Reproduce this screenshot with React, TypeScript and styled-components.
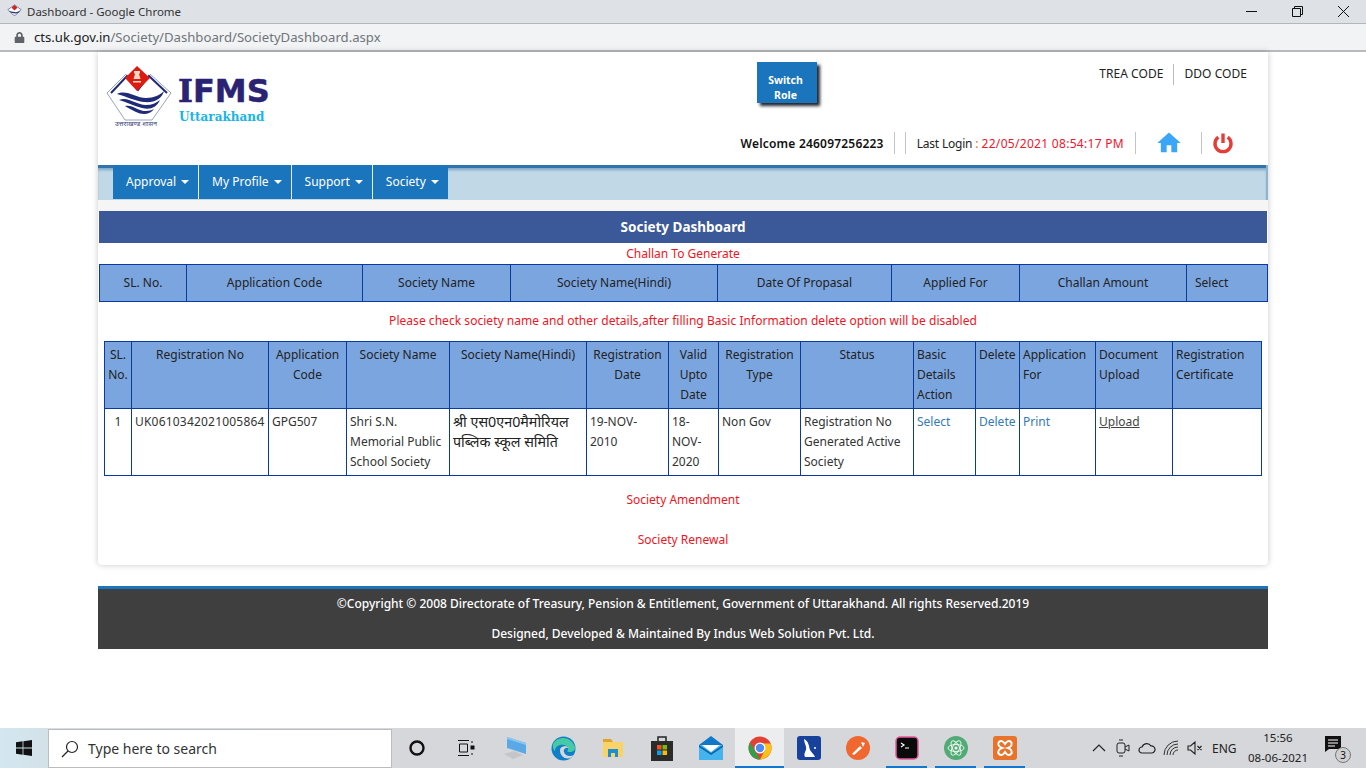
import React from "react";
import styled, { createGlobalStyle } from "styled-components";
import { FaLock } from "react-icons/fa";
import { MdHome } from "react-icons/md";

const Global = createGlobalStyle`
  html, body { margin: 0; padding: 0; background: #fff; }
  body { font-family: "Noto Sans", "Open Sans", sans-serif; font-size: 12px; color: #333; overflow: hidden; }
  * { box-sizing: border-box; }
`;
const Shell = styled.div`height: 768px; width: 1366px; display: flex; flex-direction: column; overflow: hidden;`;
const TitleBar = styled.div`height: 24px; background: #dee1e6; border-bottom: 1px solid #b4b6b9; display: flex; align-items: center; padding-left: 7px; font-size: 11.5px; color: #333; flex: none;`;
const TitleText = styled.span`margin-left: 5px; flex: 1;`;
const WinBtn = styled.div`width: 46px; height: 21px; display: flex; align-items: center; justify-content: center;`;
const AddressBar = styled.div`height: 28px; background: #f1f3f4; border-bottom: 2px solid #b9babb; display: flex; align-items: center; padding-left: 14px; font-size: 13.15px; color: #70757a; flex: none;`;
const Host = styled.span`color: #202124;`;
const UrlText = styled.span`margin-left: 9px;`;
const Main = styled.div`flex: 1; min-height: 0; display: flex; flex-direction: column; align-items: center;`;
const Card = styled.div`width: 1170px; height: 513px; background: #fff; border-radius: 0 0 4px 4px; box-shadow: 0 0 6px rgba(0,0,0,.22); flex: none;`;
const Header = styled.header`height: 113px; display: flex;`;
const LogoBox = styled.div`width: 640px; padding: 13px 0 0 8px; display: flex; align-items: flex-start;`;
const LogoText = styled.div`margin: 11px 0 0 6px; display: flex; flex-direction: column;`;
const LogoMark = styled.div`font: 700 32px/30px "DejaVu Sans", sans-serif; color: #2a2272; -webkit-text-stroke: .5px #2a2272;`;
const LogoI = styled.span`font-family: "DejaVu Serif", serif;`;
const LogoSub = styled.div`font: 700 12px/14px "DejaVu Serif", serif; color: #18b4e9; margin: 4px 0 0 1px;`;
const HeaderRight = styled.div`flex: 1; min-width: 0; display: flex; flex-direction: column; justify-content: space-between; padding: 10px 0 11px;`;
const HeaderTop = styled.div`display: flex; justify-content: space-between; align-items: flex-start; padding-left: 19px;`;
const SwitchRole = styled.button`width: 60px; height: 41px; border: 0; background: #1b75bc; color: #fff; font: 700 10.5px/15px "Noto Sans", sans-serif; padding: 11px 11px 0 8px; box-shadow: 3px 3px 3px #23272e;`;
const TopLinks = styled.div`display: flex; margin-top: 2px; padding-right: 21px; color: #222; letter-spacing: .05px;`;
const TopLink = styled.span<{ $sep?: boolean }>`height: 21px; line-height: 19px; ${(p) => (p.$sep ? "border-right: 1px solid #bbb; padding-right: 10px; margin-right: 10px;" : "")}`;
const HeaderBottom = styled.div`display: flex; justify-content: flex-end; align-items: center; height: 22px; color: #222;`;
const Welcome = styled.span`height: 22px; display: flex; align-items: center; border-right: 1px solid #c4c4c4; padding-right: 10px; margin-right: 10px; white-space: nowrap; font-weight: 600; color: #111; letter-spacing: .2px;`;
const LastLogin = styled.span`height: 22px; display: flex; align-items: center; border: solid #c4c4c4; border-width: 0 1px; padding: 0 11px; white-space: nowrap;`;
const LoginLabel = styled.span`letter-spacing: -.2px;`;
const LoginTime = styled.span`color: #f0142d; margin-left: 3px; letter-spacing: .3px;`;
const Colon = styled.span`color: #e8641b; margin-left: 3px;`;
const HomeCell = styled.span`width: 66px; height: 22px; display: flex; align-items: center; justify-content: center; border-right: 1px solid #c4c4c4;`;
const PowerCell = styled.span`width: 66px; padding-left: 10px; display: flex; align-items: center;`;
const NavBand = styled.nav`height: 35px; background: #c1d9e6; border-right: 2px solid #8fb3cf; box-shadow: inset 0 3px 0 #2f74ad, inset 0 6px 3px -1px #7ea8c9; padding-left: 15px; display: flex;`;
const NavItem = styled.div`height: 34px; background: #1b75bc; color: #fff; display: flex; align-items: center; padding: 0 9px 2px 13px; font-size: 12px; border-right: 1px solid #e7f0f6; gap: 5px; &:last-child { border-right: 0; }`;
const Caret = styled.i`width: 0; height: 0; border-left: 4px solid transparent; border-right: 4px solid transparent; border-top: 4px solid #fff; margin-top: 2px;`;
const Strip = styled.div`height: 11px; background: #f5f5f5;`;
const Panel = styled.section`padding: 0 1px;`;
const Banner = styled.h2`margin: 0; height: 32px; background: #3b5998; color: #fff; font-size: 13.5px; font-weight: 700; text-align: center; line-height: 32px;`;
const RedLine = styled.div<{ $h: number; $mb?: number }>`height: ${(p) => p.$h}px; line-height: ${(p) => p.$h}px; margin-bottom: ${(p) => p.$mb ?? 0}px; text-align: center; color: #f0141e;`;
const Notice = styled(RedLine)`letter-spacing: .04px;`;
const Grid = styled.table<{ $inset?: number }>`border-collapse: collapse; table-layout: fixed; width: ${(p) => (p.$inset ? 1157 : 1168)}px; margin: 0 ${(p) => p.$inset ?? 0}px;`;
const Th = styled.th`background: #7ba5df; border: 1px solid #0a3a9e; font-weight: 400; color: #222; padding: 3px 3px 3px; line-height: 20px; vertical-align: top;`;
const ThLeft = styled(Th)`text-align: left;`;
const Th1 = styled(Th)`height: 37px; vertical-align: middle; padding: 0 8px 1px;`;
const Th1Left = styled(Th1)`text-align: left;`;
const Td = styled.td`border: 1px solid #0a3a9e; padding: 3px 3px 3px; line-height: 20px; vertical-align: top; color: #333; overflow: hidden;`;
const TdCenter = styled(Td)`text-align: center;`;
const TdCode = styled(Td)`letter-spacing: .2px; white-space: nowrap;`;
const Hindi = styled(Td)`font-size: 14.3px; color: #222; line-height: 20px;`;
const Lnk = styled.a`color: #337ab7;`;
const Up = styled.a`color: #444; text-decoration: underline;`;
const Gap = styled.div`height: 21px; flex: none;`;
const Footer = styled.footer`width: 1170px; height: 63px; background: #3f3f3f; border-top: 3px solid #1b75bc; color: #fff; text-align: center; flex: none;`;
const FootLine = styled.div`height: 30px; line-height: 30px; font-weight: 500;`;
const Taskbar = styled.div`height: 40px; flex: none; background: linear-gradient(90deg, #d3e7f1 0, #d4dde3 6%, #d6d7da 30%, #d6d7da 100%); display: flex; align-items: stretch;`;
const StartBtn = styled.div`width: 48px; flex: none; display: flex; align-items: center; justify-content: center;`;
const SearchBox = styled.div`width: 344px; flex: none; margin-top: 1px; background: #fff; border: 1px solid #bcbcbc; display: flex; align-items: center; padding-left: 12px; gap: 9px; font-size: 14px; color: #333;`;
const TaskCell = styled.div<{ $active?: boolean; $run?: boolean }>`width: 49px; flex: none; position: relative; display: flex; align-items: center; justify-content: center; background: ${(p) => (p.$active ? "#ecedef" : "transparent")};
  ${(p) => (p.$run || p.$active) && `&::after { content: ""; position: absolute; bottom: 0; left: ${p.$active ? 0 : 4}px; right: ${p.$active ? 0 : 4}px; height: 2px; background: #0f78d4; }`}`;
const Tray = styled.div`flex: 1; display: flex; align-items: center; padding-left: 58px; color: #222;`;
const TrayIcon = styled.div`width: 24px; flex: none; display: flex; justify-content: center; align-items: center;`;
const Lang = styled.div`margin-left: 5px; font-size: 12px; width: 32px; flex: none;`;
const Clock = styled.div`margin-left: 3px; width: 62px; flex: none; text-align: center; font-size: 11.5px; line-height: 20px;`;
const Notify = styled.div`margin-left: 16px; position: relative; width: 34px; height: 24px; flex: none;`;
const Badge = styled.span`position: absolute; left: 10px; top: 11px; width: 16px; height: 16px; border-radius: 50%; border: 1px solid #777; background: #cfd0d2; font-size: 10px; line-height: 14px; text-align: center; color: #111;`;

const Emblem = () => (
  <svg width="66" height="63" viewBox="0 0 66 63" role="img">
    <path d="M1 28 L20 9 M44 9 L65 28 L46 55 H19 L1 28" fill="none" stroke="#9aa3c4" strokeWidth="1" />
    <path d="M5 28 L21 11 L32 25 L43 11 L61 28" fill="none" stroke="#1f2a78" strokeWidth="2" />
    <path d="M31 1 L44 13 L31 26 L19 13 Z" fill="#dc1c13" />
    <path d="M28 6h6v2l-1 1 1.500 5h-7l1.500-5-1-1z" fill="#f3d9c0" />
    <path d="M27 16h8v1.500h-8z" fill="#f3d9c0" />
    <path d="M11 29C20 24 30 33 40 33C48 33 54 30 58 26C56 34 48 38 38 37C28 36 20 31 11 29Z" fill="#1f2a78" />
    <path d="M13 35C22 31 30 40 40 40C46 40 50 38 54 35C50 43 44 45 36 43C28 41 20 37 13 35Z" fill="#1f2a78" />
    <path d="M19 41C26 39 32 46 40 46C43 46 46 45 48 44C44 50 36 50 30 47C26 45 22 43 19 41Z" fill="#1f2a78" />
    <text x="9" y="61" fontFamily="Noto Sans, sans-serif" fontSize="6" fill="#3d4678" textLength="42" lengthAdjust="spacingAndGlyphs">उत्तराखण्ड शासन</text>
  </svg>
);

const Favicon = () => (
  <svg width="15" height="15" viewBox="0 0 16 16"><path d="M1 6 L8 1 L15 6 L9 12 H7Z" fill="#fff" stroke="#56608e" strokeWidth=".8"/><path d="M8 1l3 3-3 3-3-3z" fill="#d81e14"/><path d="M2 8c4-1 7 3 12-1-2 5-8 3-12 1z" fill="#28327c"/></svg>
);

const Power = () => (
  <svg width="22" height="22" viewBox="0 0 22 22"><path d="M6.300 5.200a8 8 0 1 0 9.400 0" fill="none" stroke="#e53c35" strokeWidth="3.400"/><path d="M11 1.500v9.500" stroke="#e53c35" strokeWidth="3.400"/></svg>
);

const Windows = () => (
  <svg width="16" height="16" viewBox="0 0 16 16" fill="#111"><path d="M0 2.200l6.600-.9v6.300H0zM7.400 1.200L16 0v7.600H7.400zM0 8.400h6.600v6.300L0 13.800zM7.400 8.400H16V16l-8.600-1.200z"/></svg>
);
const SearchIco = () => (
  <svg width="18" height="18" viewBox="0 0 18 18" fill="none" stroke="#222" strokeWidth="1.200"><circle cx="11" cy="7" r="5.500"/><path d="M7 11l-6 6"/></svg>
);
const Cortana = () => <svg width="18" height="18" viewBox="0 0 18 18"><circle cx="9" cy="9" r="6.500" fill="none" stroke="#111" strokeWidth="2.400"/></svg>;
const TaskView = () => <svg width="18" height="18" viewBox="0 0 18 18" fill="none" stroke="#111"><path d="M1 1.500h11M1 16.500h11M2.500 5h8v8h-8z"/><path d="M15 2v2M15 14v2" /><rect x="14" y="7" width="3" height="3" fill="#111"/></svg>;
const PcIcon = () => <svg width="26" height="26" viewBox="0 0 26 26"><path d="M5 2l19 6v11L5 13z" fill="#5aa9e6"/><path d="M5 2l19 6v2L5 4z" fill="#8ec6f0"/><path d="M2 19l10-3 9 4-10 4z" fill="#c4c5c8"/></svg>;
const Edge = () => <svg width="25" height="25" viewBox="0 0 25 25"><circle cx="12.500" cy="12.500" r="12" fill="#0f7fc9"/><path d="M2 8C6 0 20-1 24 11c.6 5-6 6-8 4 2-1 2-5-3-6C8 8 4 11 4 15 2 13 1.500 11 2 8z" fill="#46c9a5"/><path d="M9 14c0-4 7-5 9-2-3-1-6 1-5 4 1 4 6 5 10 3-4 6-14 4-14-5z" fill="#d6d7da"/></svg>;
const Folder = () => <svg width="24" height="24" viewBox="0 0 24 24"><path d="M2 3h8l2 3H2z" fill="#e0a526"/><path d="M2 6h20v15H2z" fill="#f9d368"/><path d="M7 13h10v8h-3v-4h-4v4H7z" fill="#1b8fd6"/></svg>;
const Store = () => <svg width="24" height="26" viewBox="0 0 24 26"><path d="M8 6V2h8v4" fill="none" stroke="#222" strokeWidth="1.500"/><path d="M1 6h22v20H1z" fill="#2b2b2b"/><path d="M7 10h4.500v4.500H7z" fill="#f25022"/><path d="M12.500 10H17v4.500h-4.500z" fill="#7fba00"/><path d="M7 15.500h4.500V20H7z" fill="#00a4ef"/><path d="M12.500 15.500H17V20h-4.500z" fill="#ffb900"/></svg>;
const Mail = () => <svg width="26" height="26" viewBox="0 0 26 26"><path d="M1 10L13 1l12 9v15H1z" fill="#0f78c8"/><path d="M1 10h24v15H1z" fill="#43b4ee"/><path d="M4 10h18l-9 7z" fill="#fff"/><path d="M1 10l12 8 12-8v2l-12 8-12-8z" fill="#0c64a8"/></svg>;
const Chrome = () => <svg width="24" height="24" viewBox="0 0 24 24"><circle cx="12" cy="12" r="11.500" fill="#e34133"/><path d="M2 6.500L8 17l4 6.500A11.500 11.500 0 0 1 2 6.500z" fill="#2ca24c"/><path d="M12 7.500h10.500A11.500 11.500 0 0 1 12 23.500L17 14z" fill="#fbc116"/><circle cx="12" cy="12" r="5.500" fill="#fff"/><circle cx="12" cy="12" r="4.200" fill="#4a8cf0"/></svg>;
const Pen = () => <svg width="24" height="24" viewBox="0 0 24 24"><rect width="24" height="24" rx="3" fill="#18419c"/><path d="M7 3c5 2 5 8 6 11 1 2 4 4 5 7H8c-2-4 2-6 1-10-.3-2-2-5-2-8z" fill="#fff"/><circle cx="18" cy="12" r="1" fill="#fff"/></svg>;
const Postman = () => <svg width="24" height="24" viewBox="0 0 24 24"><circle cx="12" cy="12" r="12" fill="#f0682f"/><path d="M6 18l8-8 2 2-8 7z M15 6l4 1-2 4z" fill="#fff"/></svg>;
const Terminal = () => <svg width="24" height="24" viewBox="0 0 24 24"><rect x="1" y="1" width="22" height="22" rx="4" fill="#0a0a0a" stroke="#e75aa0" strokeWidth="1.500"/><path d="M6 7l3 2-3 2M10 12h4" fill="none" stroke="#fff" strokeWidth="1.200"/></svg>;
const Atom = () => <svg width="24" height="24" viewBox="0 0 24 24"><circle cx="12" cy="12" r="12" fill="#52ab76"/><g fill="none" stroke="#e6f5ea" strokeWidth="1"><ellipse cx="12" cy="12" rx="8" ry="3.500"/><ellipse cx="12" cy="12" rx="8" ry="3.500" transform="rotate(60 12 12)"/><ellipse cx="12" cy="12" rx="8" ry="3.500" transform="rotate(120 12 12)"/></g><circle cx="12" cy="12" r="1.500" fill="#fff"/></svg>;
const Xampp = () => <svg width="24" height="24" viewBox="0 0 24 24"><rect width="24" height="24" rx="3" fill="#e8742b"/><path d="M6 6c2-2 4-1 6 2 2-3 4-4 6-2s0 5-3 6c3 1 5 4 3 6s-4 1-6-2c-2 3-4 4-6 2s0-5 3-6c-3-1-5-4-3-6z" fill="none" stroke="#fff" strokeWidth="2"/></svg>;
const Chevron = () => <svg width="14" height="10" viewBox="0 0 14 10" fill="none" stroke="#222" strokeWidth="1.200"><path d="M1 8l6-6 6 6"/></svg>;
const Meet = () => <svg width="14" height="18" viewBox="0 0 14 18" fill="none" stroke="#222"><rect x="1" y="4" width="8" height="10" rx="2"/><path d="M9 8l4-2v6l-4-2M3 1h4M3 17h4"/></svg>;
const Cloud = () => <svg width="18" height="12" viewBox="0 0 18 12" fill="none" stroke="#222" strokeWidth="1.200"><path d="M4 11a3 3 0 0 1 0-6 5 5 0 0 1 9-1 3.500 3.500 0 0 1 1 7z"/></svg>;
const Wifi = () => <svg width="16" height="16" viewBox="0 0 16 16" fill="none" stroke="#333"><path d="M1 15a14 14 0 0 1 14-14M4 15A11 11 0 0 1 15 4M7 15a8 8 0 0 1 8-8M10 15a5 5 0 0 1 5-5"/></svg>;
const Mute = () => <svg width="16" height="14" viewBox="0 0 16 14" fill="none" stroke="#222" strokeWidth="1.100"><path d="M1 5h2.500L8 1v12L3.500 9H1zM10.500 5l4 4M14.500 5l-4 4"/></svg>;
const Note = () => <svg width="16" height="16" viewBox="0 0 16 16"><path d="M0 0h16v13H4l-4 3z" fill="#111"/><path d="M3 4h10M3 7h10M3 10h7" stroke="#fff"/></svg>;

const t1 = [87, 176, 148, 207, 174, 128, 167, 81];
const t1h = ["SL. No.", "Application Code", "Society Name", "Society Name(Hindi)", "Date Of Propasal", "Applied For", "Challan Amount"];
const t2 = [27, 137, 78, 103, 137, 82, 50, 82, 113, 62, 44, 76, 77, 89];
const head: [string, boolean][] = [["SL. No.", false], ["Registration No", false], ["Application Code", false], ["Society Name", false], ["Society Name(Hindi)", false], ["Registration Date", false], ["Valid Upto Date", false], ["Registration Type", false], ["Status", false], ["Basic Details Action", true], ["Delete", true], ["Application For", true], ["Document Upload", true], ["Registration Certificate", true]];

export default function App() {
  return (
    <Shell>
      <Global />
      <TitleBar>
        <Favicon />
        <TitleText>Dashboard - Google Chrome</TitleText>
        <WinBtn><svg width="11" height="11" viewBox="0 0 11 11"><path d="M0 5.500h11" stroke="#111" /></svg></WinBtn>
        <WinBtn><svg width="11" height="11" viewBox="0 0 11 11" fill="none" stroke="#111"><path d="M.5 2.500h8v8h-8zM2.500 2.500v-2h8v8h-2"/></svg></WinBtn>
        <WinBtn><svg width="11" height="11" viewBox="0 0 11 11"><path d="M0 0l11 11M11 0L0 11" stroke="#111" /></svg></WinBtn>
      </TitleBar>
      <AddressBar>
        <FaLock size={11} color="#5f6368" />
        <UrlText><Host>cts.uk.gov.in</Host>/Society/Dashboard/SocietyDashboard.aspx</UrlText>
      </AddressBar>
      <Main>
        <Card>
          <Header>
            <LogoBox>
              <Emblem />
              <LogoText>
                <LogoMark><LogoI>I</LogoI>FMS</LogoMark>
                <LogoSub>Uttarakhand</LogoSub>
              </LogoText>
            </LogoBox>
            <HeaderRight>
              <HeaderTop>
                <SwitchRole>Switch Role</SwitchRole>
                <TopLinks>
                  <TopLink $sep>TREA CODE</TopLink>
                  <TopLink>DDO CODE</TopLink>
                </TopLinks>
              </HeaderTop>
              <HeaderBottom>
                <Welcome>Welcome 246097256223</Welcome>
                <LastLogin><LoginLabel>Last Login</LoginLabel><Colon>:</Colon><LoginTime>22/05/2021 08:54:17 PM</LoginTime></LastLogin>
                <HomeCell><MdHome size={28} color="#39a6f7" /></HomeCell>
                <PowerCell><Power /></PowerCell>
              </HeaderBottom>
            </HeaderRight>
          </Header>
          <NavBand>
            {["Approval", "My Profile", "Support", "Society"].map((n) => (
              <NavItem key={n}>{n}<Caret /></NavItem>
            ))}
          </NavBand>
          <Strip />
          <Panel>
            <Banner>Society Dashboard</Banner>
            <RedLine $h={21}>Challan To Generate</RedLine>
            <Grid>
              <colgroup>{t1.map((w, i) => <col key={i} width={w} />)}</colgroup>
              <thead><tr>{t1h.map((h) => <Th1 key={h}>{h}</Th1>)}<Th1Left>Select</Th1Left></tr></thead>
            </Grid>
            <Notice $h={37} $mb={2}>Please check society name and other details,after filling Basic Information delete option will be disabled</Notice>
            <Grid $inset={5}>
              <colgroup>{t2.map((w, i) => <col key={i} width={w} />)}</colgroup>
              <thead>
                <tr>{head.map(([h, left]) => left ? <ThLeft key={h}>{h}</ThLeft> : <Th key={h}>{h}</Th>)}</tr>
              </thead>
              <tbody>
                <tr>
                  <TdCenter>1</TdCenter>
                  <TdCode>UK0610342021005864</TdCode>
                  <Td>GPG507</Td>
                  <Td>Shri S.N. Memorial Public School Society</Td>
                  <Hindi>श्री एस0एन0मैमोरियल पब्लिक स्कूल समिति</Hindi>
                  <Td>19-NOV-<br />2010</Td>
                  <Td>18-NOV-2020</Td>
                  <Td>Non Gov</Td>
                  <Td>Registration No Generated Active Society</Td>
                  <Td><Lnk>Select</Lnk></Td>
                  <Td><Lnk>Delete</Lnk></Td>
                  <Td><Lnk>Print</Lnk></Td>
                  <Td><Up>Upload</Up></Td>
                  <Td></Td>
                </tr>
              </tbody>
            </Grid>
            <RedLine $h={48}>Society Amendment</RedLine>
            <RedLine $h={32}>Society Renewal</RedLine>
          </Panel>
        </Card>
        <Gap />
        <Footer>
          <FootLine>©Copyright © 2008 Directorate of Treasury, Pension &amp; Entitlement, Government of Uttarakhand. All rights Reserved.2019</FootLine>
          <FootLine>Designed, Developed &amp; Maintained By Indus Web Solution Pvt. Ltd.</FootLine>
        </Footer>
      </Main>
      <Taskbar>
        <StartBtn><Windows /></StartBtn>
        <SearchBox><SearchIco />Type here to search</SearchBox>
        <TaskCell><Cortana /></TaskCell>
        <TaskCell><TaskView /></TaskCell>
        <TaskCell><PcIcon /></TaskCell>
        <TaskCell><Edge /></TaskCell>
        <TaskCell><Folder /></TaskCell>
        <TaskCell><Store /></TaskCell>
        <TaskCell><Mail /></TaskCell>
        <TaskCell $active><Chrome /></TaskCell>
        <TaskCell><Pen /></TaskCell>
        <TaskCell><Postman /></TaskCell>
        <TaskCell $run><Terminal /></TaskCell>
        <TaskCell $run><Atom /></TaskCell>
        <TaskCell $run><Xampp /></TaskCell>
        <Tray>
          <TrayIcon><Chevron /></TrayIcon>
          <TrayIcon><Meet /></TrayIcon>
          <TrayIcon><Cloud /></TrayIcon>
          <TrayIcon><Wifi /></TrayIcon>
          <TrayIcon><Mute /></TrayIcon>
          <Lang>ENG</Lang>
          <Clock>15:56<br />08-06-2021</Clock>
          <Notify><Note /><Badge>3</Badge></Notify>
        </Tray>
      </Taskbar>
    </Shell>
  );
}
